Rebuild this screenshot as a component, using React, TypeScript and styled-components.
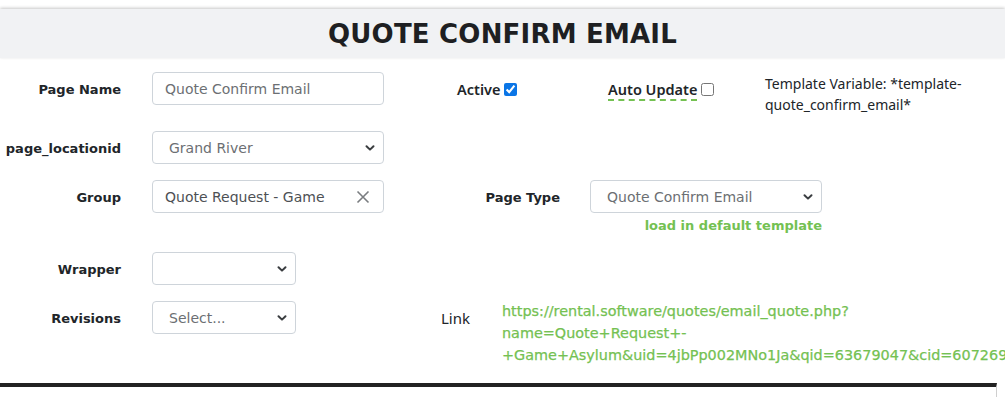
import * as React from "react";
import styled, { createGlobalStyle } from "styled-components";

const MAIN_FONT = `"DejaVu Sans", "Liberation Sans", sans-serif`;
const ALT_FONT = `"Noto Sans", "Open Sans", sans-serif`;
const GREEN = "#74c152";

const GlobalStyle = createGlobalStyle`
  html, body {
    margin: 0;
    padding: 0;
    background: #ffffff;
  }
  body {
    font-family: ${MAIN_FONT};
    color: #212529;
    overflow: hidden;
  }
`;

const Page = styled.div`
  width: 1005px;
  height: 397px;
  padding-top: 9px;
  box-sizing: border-box;
  overflow: hidden;
`;

const TitleBar = styled.div`
  height: 49px;
  background: #f1f2f4;
  box-shadow: 0 -1px 3px rgba(0, 0, 0, 0.22);
  display: flex;
  align-items: center;
  justify-content: center;
`;

const Title = styled.h1`
  margin: 0;
  padding-top: 1px;
  font-family: ${MAIN_FONT};
  font-size: 26px;
  font-weight: 700;
  letter-spacing: 0.2px;
  color: #1e1f22;
`;

const Form = styled.div`
  padding-top: 14px;
  display: flex;
  flex-direction: column;
  gap: 16px;
`;

const Row = styled.div`
  display: flex;
  align-items: flex-start;
`;

const LeftGroup = styled.div`
  width: 400px;
  display: flex;
  align-items: center;
  gap: 31px;
  flex-shrink: 0;
`;

const Label = styled.label<{ width?: number }>`
  width: ${(p) => p.width ?? 121}px;
  flex-shrink: 0;
  padding-top: 1px;
  text-align: right;
  font-family: ${MAIN_FONT};
  font-size: 13px;
  font-weight: 700;
  color: #212529;
`;

const FieldBox = styled.div<{ width?: number }>`
  position: relative;
  width: ${(p) => p.width ?? 232}px;
  height: 33px;
  box-sizing: border-box;
  border: 1px solid #ced4da;
  border-radius: 4px;
  background: #fff;
  display: flex;
  align-items: center;
  flex-shrink: 0;
`;

const FieldText = styled.span<{ pad?: number; muted?: boolean }>`
  padding-left: ${(p) => p.pad ?? 12}px;
  font-family: ${MAIN_FONT};
  font-size: 14px;
  color: ${(p) => (p.muted ? "#6c6f73" : "#4d5054")};
  white-space: nowrap;
`;

const Chevron = styled.svg`
  position: absolute;
  right: 8px;
  top: 50%;
  margin-top: -4px;
  width: 10px;
  height: 8px;
`;

const ClearIcon = styled.svg`
  position: absolute;
  right: 13px;
  top: 50%;
  margin-top: -7px;
  width: 14px;
  height: 14px;
`;

const Select: React.FC<{ value?: string; width?: number }> = ({
  value,
  width,
}) => (
  <FieldBox width={width}>
    {value && (
      <FieldText pad={16} muted>
        {value}
      </FieldText>
    )}
    <Chevron viewBox="0 0 10 8">
      <path
        d="M1.5 2.2 L5 5.6 L8.5 2.2"
        fill="none"
        stroke="#3a3d40"
        strokeWidth="2"
        strokeLinecap="round"
        strokeLinejoin="round"
      />
    </Chevron>
  </FieldBox>
);

const RightGroup = styled.div`
  display: flex;
  align-items: flex-start;
`;

const CheckLabel = styled.div<{ width: number; indent: number }>`
  width: ${(p) => p.width}px;
  padding-left: ${(p) => p.indent}px;
  box-sizing: border-box;
  display: flex;
  align-items: center;
  gap: 4px;
  height: 34px;
  font-family: ${ALT_FONT};
  font-size: 14.5px;
  font-weight: 600;
  color: #212529;
`;

const Dashed = styled.span`
  border-bottom: 2px dashed ${GREEN};
  line-height: 19px;
  padding-top: 2px;
`;

const Check = styled.input`
  margin: 0;
  width: 13px;
  height: 13px;
  accent-color: #0a75e6;
`;

const TemplateVar = styled.div`
  width: 200px;
  padding-top: 1px;
  font-family: ${ALT_FONT};
  font-size: 14px;
  line-height: 21px;
  color: #212529;
`;

const PageTypeCol = styled.div`
  display: flex;
  flex-direction: column;
  align-items: flex-end;
  gap: 3px;
`;

const PageTypeLine = styled.div`
  display: flex;
  align-items: center;
  gap: 30px;
`;

const Hint = styled.div`
  font-family: ${MAIN_FONT};
  font-size: 13px;
  font-weight: 700;
  color: ${GREEN};
  line-height: 20px;
`;

const LinkLabel = styled.div`
  width: 72px;
  padding-left: 41px;
  box-sizing: border-box;
  flex-shrink: 0;
  font-family: ${ALT_FONT};
  font-size: 15px;
  line-height: 34px;
  color: #212529;
`;

const LinkText = styled.a`
  margin-left: 30px;
  margin-top: -1px;
  font-family: ${MAIN_FONT};
  font-size: 14.4px;
  font-weight: 400;
  line-height: 22px;
  color: ${GREEN};
  text-decoration: none;
  white-space: pre;
  -webkit-text-stroke: 0.25px ${GREEN};
`;

const Divider = styled.div`
  margin-top: 17px;
  width: 997px;
  height: 20px;
  border-top: 4px solid #222222;
  border-right: 1px solid #cfcfcf;
  box-sizing: border-box;
`;

const App: React.FC = () => (
  <Page>
    <GlobalStyle />
    <TitleBar>
      <Title>QUOTE CONFIRM EMAIL</Title>
    </TitleBar>
    <Form>
      <Row>
        <LeftGroup>
          <Label>Page Name</Label>
          <FieldBox>
            <FieldText muted>Quote Confirm Email</FieldText>
          </FieldBox>
        </LeftGroup>
        <RightGroup>
          <CheckLabel width={208} indent={57}>
            Active
            <Check type="checkbox" defaultChecked />
          </CheckLabel>
          <CheckLabel width={157} indent={0}>
            <Dashed>Auto Update</Dashed>
            <Check type="checkbox" />
          </CheckLabel>
          <TemplateVar>
            Template Variable: *template-
            <br />
            quote_confirm_email*
          </TemplateVar>
        </RightGroup>
      </Row>
      <Row>
        <LeftGroup>
          <Label>page_locationid</Label>
          <Select value="Grand River" />
        </LeftGroup>
      </Row>
      <Row>
        <LeftGroup>
          <Label>Group</Label>
          <FieldBox>
            <FieldText>Quote Request - Game</FieldText>
            <ClearIcon viewBox="0 0 14 14">
              <path
                d="M1.5 1.5 L12.5 12.5 M12.5 1.5 L1.5 12.5"
                stroke="#7a7d80"
                strokeWidth="1.6"
              />
            </ClearIcon>
          </FieldBox>
        </LeftGroup>
        <PageTypeCol>
          <PageTypeLine>
            <Label width={160}>Page Type</Label>
            <Select value="Quote Confirm Email" />
          </PageTypeLine>
          <Hint>load in default template</Hint>
        </PageTypeCol>
      </Row>
      <Row>
        <LeftGroup>
          <Label>Wrapper</Label>
          <Select width={144} />
        </LeftGroup>
      </Row>
      <Row>
        <LeftGroup>
          <Label>Revisions</Label>
          <Select value="Select..." width={144} />
        </LeftGroup>
        <LinkLabel>Link</LinkLabel>
        <LinkText href="#">
          {"https://rental.software/quotes/email_quote.php?\nname=Quote+Request+-\n+Game+Asylum&uid=4jbPp002MNo1Ja&qid=63679047&cid=60726929&"}
        </LinkText>
      </Row>
    </Form>
    <Divider />
  </Page>
);

export default App;
